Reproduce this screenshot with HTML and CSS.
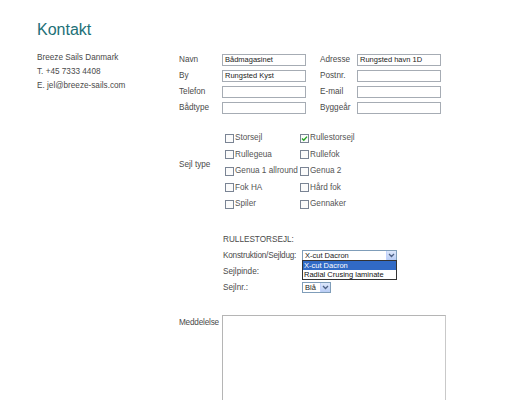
FILE: index.html
```html
<!DOCTYPE html>
<html lang="da">
<head>
<meta charset="utf-8">
<title>Kontakt</title>
<link rel="stylesheet" href="styles.css">
</head>
<body>
<div class="page">
  <aside class="contact">
    <h1 class="title">Kontakt</h1>
    <p class="info">Breeze Sails Danmark<br>T. +45 7333 4408<br>E. jel@breeze-sails.com</p>
  </aside>
  <form class="form">
    <div class="fields">
      <span class="lbl">Navn</span><span class="inp">Bådmagasinet</span>
      <span class="lbl">Adresse</span><span class="inp">Rungsted havn 1D</span>
      <span class="lbl">By</span><span class="inp">Rungsted Kyst</span>
      <span class="lbl">Postnr.</span><span class="inp"></span>
      <span class="lbl">Telefon</span><span class="inp"></span>
      <span class="lbl">E-mail</span><span class="inp"></span>
      <span class="lbl">Bådtype</span><span class="inp"></span>
      <span class="lbl">Byggeår</span><span class="inp"></span>
    </div>
    <div class="sail">
      <span class="lbl sail-lbl">Sejl type</span>
      <div class="checks">
        <span class="chk"><span class="box"></span>Storsejl</span>
        <span class="chk"><span class="box on"><svg viewBox="0 0 7 7" width="7" height="7"><path d="M1 3.5 L2.8 5.3 L6 1.6" fill="none" stroke="#21a121" stroke-width="1.4"/></svg></span>Rullestorsejl</span>
        <span class="chk"><span class="box"></span>Rullegeua</span>
        <span class="chk"><span class="box"></span>Rullefok</span>
        <span class="chk"><span class="box"></span>Genua 1 allround</span>
        <span class="chk"><span class="box"></span>Genua 2</span>
        <span class="chk"><span class="box"></span>Fok HA</span>
        <span class="chk"><span class="box"></span>Hård fok</span>
        <span class="chk"><span class="box"></span>Spiler</span>
        <span class="chk"><span class="box"></span>Gennaker</span>
      </div>
    </div>
    <div class="rulle">
      <span class="lbl rulle-head">RULLESTORSEJL:</span>
      <span class="lbl tight">Konstruktion/Sejldug:</span>
      <span class="sel-wrap">
        <span class="sel wide"><span class="sel-val">X-cut Dacron</span><span class="sel-btn"><svg viewBox="0 0 7 5" width="7" height="5"><path d="M1 1 L3.5 3.5 L6 1" fill="none" stroke="#4d6185" stroke-width="1.3"/></svg></span></span>
        <span class="drop">
          <span class="opt hl">X-cut Dacron</span>
          <span class="opt">Radial Crusing laminate</span>
        </span>
      </span>
      <span class="lbl">Sejlpinde:</span>
      <span></span>
      <span class="lbl">Sejlnr.:</span>
      <span class="sel narrow"><span class="sel-val">Blå</span><span class="sel-btn"><svg viewBox="0 0 7 5" width="7" height="5"><path d="M1 1 L3.5 3.5 L6 1" fill="none" stroke="#4d6185" stroke-width="1.3"/></svg></span></span>
    </div>
    <div class="msg">
      <span class="lbl tight">Meddelelse</span>
      <span class="area"></span>
    </div>
  </form>
</div>
</body>
</html>
```

FILE: styles.css
```css
html, body {
  margin: 0;
  padding: 0;
  background: #fff;
}
body {
  font-family: "Liberation Sans", Arial, sans-serif;
  font-size: 8.2px;
  color: #4a4a4a;
  overflow: hidden;
}
.page {
  display: flex;
  padding-left: 37px;
  padding-top: 21px;
}
.contact {
  width: 142px;
  flex: none;
}
.title {
  margin: 0;
  font-weight: normal;
  font-size: 16px;
  line-height: 18px;
  color: #1d7077;
}
.info {
  margin: 12px 0 0;
  line-height: 14px;
}
.form {
  padding-top: 31px;
  display: flex;
  flex-direction: column;
}
.lbl {
  line-height: 16px;
  white-space: nowrap;
}
.tight {
  letter-spacing: -0.2px;
}
.fields {
  display: grid;
  grid-template-columns: 43px 98px 37px 84px;
  grid-auto-rows: 16px;
  align-items: center;
}
.inp {
  box-sizing: border-box;
  width: 84px;
  height: 12px;
  border: 1px solid #a6acb4;
  font-size: 7.5px;
  line-height: 10px;
  padding-left: 2px;
  color: #222;
  background: #fff;
  white-space: nowrap;
}
.sail {
  margin-top: 14px;
  display: flex;
}
.sail-lbl {
  width: 46px;
  flex: none;
  margin-top: 27px;
}
.checks {
  display: grid;
  grid-template-columns: 75px 80px;
  grid-auto-rows: 16.5px;
  align-items: center;
}
.chk {
  display: flex;
  align-items: center;
  gap: 1px;
  line-height: 10px;
  white-space: nowrap;
  color: #555;
}
.box {
  box-sizing: border-box;
  width: 9px;
  height: 9px;
  border: 1px solid #7a8494;
  background: #fbfbfb;
  display: flex;
  align-items: center;
  justify-content: center;
}
.rulle {
  margin-top: 19px;
  margin-left: 44px;
  display: grid;
  grid-template-columns: 79px auto;
  grid-auto-rows: 16px;
  align-items: center;
}
.rulle-head {
  grid-column: 1 / 3;
}
.sel-wrap {
  position: relative;
  width: 95px;
  height: 11px;
}
.sel {
  box-sizing: border-box;
  display: flex;
  height: 11px;
  border: 1px solid #7f9db9;
  background: #fff;
  font-size: 7.5px;
  line-height: 9px;
  color: #222;
}
.sel.wide {
  width: 95px;
}
.sel.narrow {
  width: 29px;
}
.sel-val {
  flex: 1;
  padding-left: 2px;
  overflow: hidden;
  white-space: nowrap;
}
.sel-btn {
  width: 9px;
  flex: none;
  background: linear-gradient(#dde7fb, #b9cdf5);
  border-left: 1px solid #c3d3fd;
  display: flex;
  align-items: center;
  justify-content: center;
}
.drop {
  position: absolute;
  left: 0;
  top: 10px;
  box-sizing: border-box;
  width: 95px;
  border: 1px solid #333;
  background: #fff;
  display: flex;
  flex-direction: column;
  z-index: 2;
}
.opt {
  font-size: 7.5px;
  line-height: 9px;
  padding-left: 1px;
  color: #111;
  white-space: nowrap;
}
.opt.hl {
  background: #316ac5;
  color: #fff;
}
.msg {
  margin-top: 19px;
  display: flex;
}
.msg .lbl {
  width: 43px;
  flex: none;
  line-height: 12px;
  margin-top: 2px;
}
.area {
  box-sizing: border-box;
  width: 224px;
  height: 110px;
  border: 1px solid #c9c9c9;
  border-top-color: #b5b5b5;
  border-left-color: #b5b5b5;
  background: #fff;
}
```
